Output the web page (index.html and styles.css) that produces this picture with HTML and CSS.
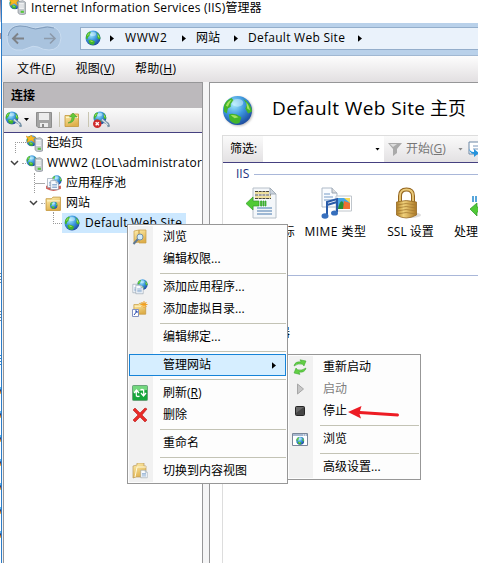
FILE: index.html
```html
<!DOCTYPE html>
<html lang="zh-CN">
<head>
<meta charset="utf-8">
<title>Internet Information Services (IIS)管理器</title>
<link rel="stylesheet" href="styles.css">
</head>
<body>
<svg class="defs" aria-hidden="true">
  <defs>
    <radialGradient id="sea" cx=".38" cy=".3" r=".75"><stop offset="0" stop-color="#a4e8fc"/><stop offset=".5" stop-color="#3c96de"/><stop offset="1" stop-color="#1a459a"/></radialGradient>
    <linearGradient id="gold" x2="1"><stop offset="0" stop-color="#ad7b20"/><stop offset=".35" stop-color="#f1d27c"/><stop offset="1" stop-color="#ac7824"/></linearGradient>
    <linearGradient id="fold" y2="1" x2=".4"><stop offset="0" stop-color="#fff0b0"/><stop offset="1" stop-color="#dfb04c"/></linearGradient>
    <symbol id="globe" viewBox="0 0 32 32">
      <circle cx="16" cy="16" r="15" fill="url(#sea)"/>
      <path d="M2 11Q4 5 10 3L12 6 9 9 9 12 6 14 5 19 2 17ZM7 20Q13 18 20 23L18 29Q12 31 8 26ZM22 4Q30 8 31 17L27 19 24 14 26 10Z" fill="#43b52b"/>
      <path d="M4 11Q6 6 10 5L8 8 6 12ZM25 7Q28 11 29 16L26 14ZM9 21Q13 20 17 23L13 24Z" fill="#a4e15e"/>
      <ellipse cx="16" cy="8" rx="6" ry="4" fill="#e4faff" opacity=".45"/>
    </symbol>
    <symbol id="server" viewBox="0 0 16 16">
      <use href="#globe" x="0" y="0" width="11" height="11"/>
      <path d="M8.5 3.5 13 2.5 15.5 4V15L11 16 8.5 14Z" fill="#c3c9ce" stroke="#8b9299" stroke-width=".7"/>
      <path d="M9.5 5.5H14M9.5 7.5H14M9.5 9.5H14" stroke="#fff"/><path d="M11 12h3v2h-3z" fill="#56c83a"/>
    </symbol>
    <symbol id="start" viewBox="0 0 16 16">
      <use href="#server" width="16" height="16"/>
      <path d="M0 1 3 2 5 0 6 2 9 2 7 4 8 7 5 5 1 7 2 4Z" fill="#f8ba22" stroke="#df8915" stroke-width=".5"/>
    </symbol>
    <symbol id="folder" viewBox="0 0 16 16">
      <path d="M1 3.5H6L7.5 2H14.5V14.5H1Z" fill="url(#fold)" stroke="#c39539" stroke-width=".8"/>
      <path d="M2 5.5H14" stroke="#fff5c7"/>
    </symbol>
    <symbol id="page" viewBox="0 0 16 16">
      <path d="M1.5.5H10.5L14.5 4.5V15.5H1.5Z" fill="#f9fcff" stroke="#8796a5"/>
      <path d="M10.5.5V4.5H14.5" fill="#d6dee8" stroke="#8796a5"/><path d="M4 7H12M4 9.5H12M4 12H12" stroke="#4e7eb5"/>
    </symbol>
    <symbol id="plug" viewBox="0 0 16 16">
      <use href="#globe" width="13" height="13"/>
      <path d="M8 8 12 11M11 10 14 12 15 15" stroke="#7793a8" stroke-width="2.4" fill="none"/><path d="M8.5 8 12 11M12 11 14 13" stroke="#d6e2ea" stroke-width="1.1"/>
    </symbol>
    <symbol id="lens" viewBox="0 0 16 16">
      <path d="M2 2 7 1V13L2 14ZM7 1H14V14H7Z" fill="url(#fold)" stroke="#c69b43" stroke-width=".7"/>
      <path d="M6 10 1.5 15" stroke="#5e7893" stroke-width="2"/><circle cx="8" cy="8" r="3" fill="#d2ecfa" stroke="#7590a8"/>
    </symbol>
    <symbol id="apps" viewBox="0 0 16 16">
      <use href="#globe" x="5" width="11" height="11"/><use href="#page" x="0" y="4" width="9" height="11"/><use href="#page" x="3" y="5" width="9" height="11"/>
    </symbol>
    <symbol id="pool" viewBox="0 0 16 16">
      <path d="M1 10H15V13Q8 17 1 13Z" fill="#d0605a"/><use href="#globe" x="6" width="10" height="10"/><use href="#page" x="1.5" y="2" width="9" height="11"/><use href="#page" x="4.5" y="4" width="9" height="11"/>
    </symbol>
    <symbol id="newdir" viewBox="0 0 16 16">
      <use href="#folder" x="1" width="14" height="15"/><path d="M12 0V7M8.5 3.5H15.5M9.5 1 14.5 6M14.5 1 9.5 6" stroke="#f49f1e"/>
      <path d="M.5 8.5H6.5V15.5H.5Z" fill="#fff" stroke="#8392c0"/><path d="M2 14 5 10M3 10H5V12" stroke="#2547b0" fill="none"/>
    </symbol>
    <symbol id="refresh" viewBox="0 0 16 16">
      <rect x=".5" y=".5" width="15" height="15" rx="1" fill="#16a63b" stroke="#6aa37a"/><path d="M1 1H15V5L1 7Z" fill="#73d77e"/>
      <path d="M4.5 11.5Q4 8 4.5 6M2 8 4.5 5 7 8M11.5 4.5Q12 8 11.5 10M9 8 11.5 11 14 8M4.5 11Q6 12 7.5 11M11.5 5Q10 4 8.5 5" stroke="#fff" stroke-width="1.3" fill="none"/>
    </symbol>
    <symbol id="cross" viewBox="0 0 16 16"><path d="M1 3 3 1Q6 4 8 6L13 1 15 2 10 8 15 13 13 15 8 10 3 15 1 13 6 8Z" fill="#e92b27" stroke="#b51b1b" stroke-width=".6"/></symbol>
    <symbol id="content" viewBox="0 0 16 16"><path d="M1 3 5 2V0H12V3H14V14H4L1 15Z" fill="url(#fold)" stroke="#b9995d" stroke-width=".7"/><path d="M3 14 5 4H14" fill="none" stroke="#fff8db"/><use href="#page" x="8" y="6" width="8" height="10"/></symbol>
    <symbol id="restart" viewBox="0 0 16 16"><path d="M2 7Q3 2 9 3L8 .8 14 2 12 7 10.5 5.2Q6 4 2 7ZM14 9Q13 14 7 13L8 15.4 2 14 4 9 5.5 10.8Q10 12 14 9Z" fill="#62cf45" stroke="#36a12a" stroke-width=".5"/></symbol>
    <symbol id="play" viewBox="0 0 16 16"><path d="M5.5 3 11.5 8 5.5 13Z" fill="#c6c6c6" stroke="#a6a6a6"/></symbol>
    <symbol id="stop" viewBox="0 0 16 16"><rect x="3.5" y="3.5" width="9" height="9" rx="1" fill="#454545" stroke="#252525"/><path d="M4 4H12L4 10Z" fill="#686868"/></symbol>
    <symbol id="browse" viewBox="0 0 16 16"><path d="M.5 2.5H15.5V14.5H.5Z" fill="#fff" stroke="#7a8799"/><path d="M1 3H15V5H1Z" fill="#a7b7cf"/><path d="M11 4H14" stroke="#fff" stroke-dasharray="1"/><use href="#globe" x="4" y="5.5" width="8.5" height="8.5"/></symbol>
    <symbol id="tri" viewBox="0 0 5 8"><path d="M0 0 5 4 0 8Z"/></symbol>
  </defs>
</svg>

<div class="screen">
  <div class="backdrop"></div>
  <main class="window">
    <header class="title"><svg class="i17"><use href="#start"/></svg><span class="title-en">Internet Information Services (IIS)</span><span>管理器</span></header>
    <nav class="nav">
      <svg class="history" viewBox="0 0 56 28">
        <path d="M13 1Q20 1 24 3 28 5 34 3 39 1 45 2 55 5 55 14 54 26 43 26 37 26 32 23 27 21 22 24 17 27 10 26 1 24 1 13 2 2 13 1Z" fill="#a9c3de" stroke="#c9dcf0"/>
        <path d="M2 12Q4 2 14 2 21 2 25 4 29 6 35 4 41 2 48 4" fill="none" stroke="#7f9bbb"/>
        <path d="M18 14.5H7M12 9.5 7 14.5 12 19.5" fill="none" stroke="#7e8287" stroke-width="1.9"/><path d="M38 14.5H49M44 9.5 49 14.5 44 19.5" fill="none" stroke="#8d9aaa" stroke-width="1.6"/>
      </svg>
      <div class="address"><svg class="i16"><use href="#globe"/></svg><svg class="tri t1"><use href="#tri"/></svg><span class="lat a1">WWW2</span><svg class="tri t2"><use href="#tri"/></svg><span class="a2">网站</span><svg class="tri t3"><use href="#tri"/></svg><span class="lat a3">Default Web Site</span><svg class="tri"><use href="#tri"/></svg></div>
    </nav>
    <div class="menubar"><span>文件(<u>F</u>)</span><span>视图(<u>V</u>)</span><span>帮助(<u>H</u>)</span></div>
    <div class="body">
      <aside class="left">
        <h2>连接</h2>
        <div class="tools">
          <svg class="i17"><use href="#plug"/></svg><i class="down"></i>
          <svg class="i16 save" viewBox="0 0 16 16"><path d="M.5.5H15.5V15.5H2L.5 14Z" fill="#a4a4a4" stroke="#8d8d8d"/><path d="M3 1H13V8H3ZM4 11H12V15H4Z" fill="#ececec"/><path d="M6 12H8V15H6Z" fill="#888"/></svg>
          <i class="sep"></i><svg class="i16" viewBox="0 0 16 16"><use href="#folder"/><path d="M4 11Q8 10 8 5H5.5L9 1 13 5H10.5Q10 11 4 11Z" fill="#63c938" stroke="#37942b" stroke-width=".5"/></svg>
          <i class="sep s2"></i><svg class="i17" viewBox="0 0 16 16"><use href="#plug"/><circle cx="4" cy="12" r="4" fill="#cf2a2a"/><path d="M2.5 10.5 5.5 13.5M5.5 10.5 2.5 13.5" stroke="#fff" stroke-width="1.3"/></svg>
        </div>
        <div class="tree">
          <div class="row r1"><i class="elbow first"></i><svg class="i17"><use href="#start"/></svg><span>起始页</span></div>
          <div class="row r2"><svg class="chev" viewBox="0 0 9 6"><path d="M1 1 4.5 4.5 8 1"/></svg><i class="dots"></i><svg class="i17"><use href="#server"/></svg><span class="host">WWW2 (LOL\administrator</span></div>
          <div class="row r3"><i class="elbow through"></i><svg class="i17"><use href="#pool"/></svg><span>应用程序池</span></div>
          <div class="row r4"><svg class="chev" viewBox="0 0 9 6"><path d="M1 1 4.5 4.5 8 1"/></svg><i class="dots"></i><svg class="i17" viewBox="0 0 16 16"><use href="#folder"/><use href="#globe" x="4.5" y="6" width="7.5" height="7.5"/></svg><span>网站</span></div>
          <div class="row r5"><i class="elbow"></i><div class="selected"><svg class="i16"><use href="#globe"/></svg><span class="lat">Default Web Site</span></div></div>
        </div>
      </aside>
      <section class="right">
        <div class="heading"><svg class="big-globe"><use href="#globe"/></svg><h1><span class="h-en">Default Web Site</span> 主页</h1></div>
        <div class="content">
          <div class="filter"><span class="flabel">筛选:</span><div class="field"><i class="down"></i></div><svg class="funnel" viewBox="0 0 14 14"><path d="M0 1H14L9 7V11L5 14V7Z" fill="#aaa"/><path d="M2 2H9L5 5Z" fill="#ddd"/></svg><span class="go">开始(<u>G</u>)</span><i class="down dim"></i><svg class="showall" viewBox="0 0 16 16"><path d="M1 1H15V13H1Z" fill="#fff" stroke="#6d87a5"/><path d="M5 5H15M5 8H15" stroke="#7c98bb"/><path d="M1 5Q1 11 6 11V8L11 12 6 16V13Q1 13 1 5Z" fill="#2593dc"/></svg></div>
          <div class="group"><span>IIS</span><i></i></div>
          <div class="features">
            <div class="feature"><svg viewBox="0 0 32 32"><path d="M8 1H25L31 7V31H8Z" fill="#f4f7fa" stroke="#b7c0c9"/><path d="M25 1V7H31Z" fill="#ccd5df" stroke="#a3adb8"/><path d="M10 4.5H24M10 8H26M10 11.5H26" stroke="#4a4638" stroke-width="1.2" stroke-dasharray="3 .7"/><path d="M10 6H24M10 10H26" stroke="#e9c942"/><path d="M12 21H27M12 24H27M12 27H27" stroke="#4779ad"/><path d="M1 16.5 8 10V14H14V19H8V23ZM15.5 14H17V19H15.5ZM18 14H19V19H18ZM20 14H21V19H20Z" fill="#50ca35" stroke="#329d29" stroke-width=".7"/></svg><span class="header-label">HTTP 响应标</span></div>
            <div class="feature"><svg viewBox="0 0 32 32"><path d="M2 1H12L17 6V20H2Z" fill="#fafcff" stroke="#aebac8"/><path d="M12 1V6H17" fill="#ddd" stroke="#9ba6b4"/><path d="M4 7H10M4 10H13M4 13H13" stroke="#779bc6"/><path d="M16 9H31.5V24H16Z" fill="#fff" stroke="#c0c6cc"/><path d="M18 11H30V22H18Z" fill="#46a4e6"/><path d="M18 22Q20 12 23 15L26 22Z" fill="#278f34"/><path d="M23 22 24 14 30 16V22Z" fill="#ef7032"/><path d="M24 11H30V16Z" fill="#f5d955"/><path d="M7 28V15L17 12V25M7 18 17 15" stroke="#285aa8" stroke-width="2" fill="none"/><ellipse cx="5" cy="29" rx="3.5" ry="2.7" fill="#376fbd"/><ellipse cx="14.5" cy="26" rx="3.5" ry="2.6" fill="#376fbd"/></svg><span class="mime">MIME 类型</span></div>
            <div class="feature"><svg class="lock" viewBox="0 0 32 32"><ellipse cx="20" cy="28" rx="10" ry="3" fill="#ddd"/><path d="M9 17V9Q9 2.5 15.5 2.5T22 9V17" fill="none" stroke="#94651e" stroke-width="4"/><path d="M9 17V9Q9 2.5 15.5 2.5T22 9V17" fill="none" stroke="#eacb7c" stroke-width="1.8"/><path d="M5.5 15Q15 12 25.5 15V28Q15 34 5.5 28Z" fill="url(#gold)" stroke="#966a24" stroke-width=".8"/><path d="M6 18Q15 15 25 18M6 21Q15 18 25 21M6 24Q15 21 25 24M6 27Q15 24 25 27" stroke="#a67c34" fill="none" stroke-width=".8"/></svg><span>SSL 设置</span></div>
            <div class="feature last"><svg viewBox="0 0 32 32"><path d="M3 10H9M3 12H9M3 14H9" stroke="#2089cf" stroke-width="1.5" stroke-dasharray="2 1"/><path d="M1 22 8 16V20H19V25H8V29Z" fill="#50c936" stroke="#2e9728" stroke-width=".7"/></svg><span>处理</span></div>
          </div>
          <div class="group second"><i></i></div>
          <div class="editor">配置编辑器</div>
        </div>
      </section>
    </div>
  </main>

  <div class="popup context">
    <div class="item"><svg class="i16"><use href="#lens"/></svg><span>浏览</span></div>
    <div class="item"><svg class="i16"></svg><span>编辑权限...</span></div>
    <hr>
    <div class="item"><svg class="i16"><use href="#apps"/></svg><span>添加应用程序...</span></div>
    <div class="item"><svg class="i16"><use href="#newdir"/></svg><span>添加虚拟目录...</span></div>
    <hr>
    <div class="item"><svg class="i16"></svg><span>编辑绑定...</span></div>
    <hr>
    <div class="item active"><svg class="i16"></svg><span>管理网站</span><svg class="tri"><use href="#tri"/></svg></div>
    <hr>
    <div class="item"><svg class="i16"><use href="#refresh"/></svg><span>刷新(<u>R</u>)</span></div>
    <div class="item"><svg class="i16"><use href="#cross"/></svg><span>删除</span></div>
    <hr>
    <div class="item"><svg class="i16"></svg><span>重命名</span></div>
    <hr>
    <div class="item"><svg class="i16"><use href="#content"/></svg><span>切换到内容视图</span></div>
  </div>
  <div class="popup submenu">
    <div class="item"><svg class="i16"><use href="#restart"/></svg><span>重新启动</span></div>
    <div class="item disabled"><svg class="i16"><use href="#play"/></svg><span>启动</span></div>
    <div class="item"><svg class="i16"><use href="#stop"/></svg><span>停止</span></div>
    <hr>
    <div class="item"><svg class="i16"><use href="#browse"/></svg><span>浏览</span></div>
    <hr>
    <div class="item"><svg class="i16"></svg><span>高级设置...</span></div>
  </div>
  <svg class="pointer" viewBox="0 0 54 14"><path d="M1 6 14.5 0 13 5 51 7.5Q53 9 51 10.5L12.5 8 14 12.5Z" fill="#ed1c24"/></svg>
</div>
</body>
</html>
```
FILE: styles.css
```css
* { box-sizing: border-box; }
body { margin: 0; background: #fff; color: #000; font: 12px/16px "Open Sans", "Noto Sans CJK SC", sans-serif; }
svg { flex: none; }
u { text-underline-offset: 1px; }
.defs { position: absolute; width: 0; height: 0; }
.screen { position: relative; display: flex; width: 478px; height: 563px; overflow: hidden; white-space: nowrap; }
.backdrop { width: 1px; flex: none; background:
  linear-gradient(#746d91, #d9d7e3) 0 0 / 1px 22px no-repeat,
  linear-gradient(#b9928d, #b9928d) 0 33px / 1px 6px no-repeat,
  repeating-linear-gradient(#80858a 0 1px, #fff 1px 3px) 0 273px / 1px 10px no-repeat,
  repeating-linear-gradient(#80858a 0 1px, #fff 1px 3px) 0 311px / 1px 10px no-repeat,
  repeating-linear-gradient(#3a85c8 0 1px, #fff 1px 3px) 0 355px / 1px 10px no-repeat,
  repeating-linear-gradient(#62b6ee 0 2px, #172c70 3px, #d5762f 5px, #f3d476 7px, #fff 7px 24px) 0 387px / 1px 152px no-repeat, #fff; }
.window { display: flex; flex-direction: column; flex: 1; min-width: 0; border-left: 1px solid #2c7cc7; }
.i16 { width: 16px; height: 16px; }
.i17 { width: 17px; height: 17px; }
.title { display: flex; flex: none; height: 23px; padding: 0 0 7px 7px; align-items: center; }
.title .i17 { margin: -3px 5px 0 0; }
.title-en { letter-spacing: .22px; }
.lat { letter-spacing: .27px; }
.nav { display: flex; flex: none; align-items: center; height: 33px; padding-left: 4px; background: #b9d1ea; border-bottom: 1px solid #a1b8d2; }
.history { width: 56px; height: 28px; margin-top: -2px; }
.address { display: flex; align-items: center; flex: 1; height: 23px; margin: -2px 0 0 18px; padding-left: 4px; background: #eaf2fb; border: solid #94aecb; border-width: 1px 0 1px 1px; }
.address .i16 { margin-right: 9px; }
.tri { width: 4px; height: 7px; flex: none; }
.t1 { margin-right: 11px; }
.a1 { width: 57px; letter-spacing: .6px; }
.t2 { margin-right: 10px; }
.a2 { width: 38px; }
.t3 { margin-right: 10px; }
.a3 { width: 110px; }
.menubar { display: flex; flex: none; gap: 20px; height: 26px; padding: 5px 0 0 15px; background: linear-gradient(#fdfdfd, #e2dfe1); letter-spacing: .25px; }
.body { display: flex; flex: 1; min-height: 0; background: #f5f5f6; }
.left { width: 200px; margin-left: 1px; flex: none; border: solid #969698; border-width: 1px 1px 0; background: #fff; overflow: hidden; }
h2 { margin: 0; height: 25px; padding: 5px 0 0 7px; background: #bcb9bc; font-size: 12px; line-height: 16px; }
.tools { display: flex; align-items: center; height: 25px; padding: 0 0 1px 1px; background: linear-gradient(#fafafa, #e3e1e3); border-bottom: 1px solid #454080; }
.down { width: 5px; height: 3px; background: #000; clip-path: polygon(0 0, 100% 0, 50% 100%); flex: none; }
.tools .down { margin-left: 2px; }
.save { margin: 0 7px; }
.sep { width: 1px; height: 15px; margin-right: 4px; background: #c9c5b1; flex: none; }
.s2 { margin-left: 8px; }
.row { display: flex; align-items: center; height: 20px; }
.row .i17 { margin-right: 4px; }
.elbow { width: 11px; height: 12px; margin-top: -10px; border: dotted #999; border-width: 0 0 1px 1px; flex: none; }
.first { height: 11px; margin-top: 9px; border-width: 1px 0 0 1px; }
.through { height: 20px; margin-top: 0; border-bottom: 0; background: linear-gradient(#aaa, #aaa) 0 10px / 11px 1px no-repeat; }
.dots { width: 4px; border-top: 1px dotted #aaa; flex: none; }
.chev { width: 9px; height: 6px; fill: none; stroke: #404040; stroke-width: 1.5; }
.host { letter-spacing: .24px; }
.r1 { padding-left: 11px; }
.r2 { padding-left: 6px; }
.r2 .dots { margin-left: 3px; }
.r3 { padding-left: 30px; }
.r4 { padding-left: 25px; }
.r4 .dots { margin-left: 3px; }
.r5 { padding-left: 49px; }
.r5 .elbow { margin-right: -2px; }
.selected { display: flex; align-items: center; gap: 5px; width: 124px; height: 20px; padding-left: 2px; background: #cce8ff; }
.right { flex: 1; min-width: 0; margin-left: 6px; border: solid #969698; border-width: 1px 0 0 1px; background: #fff; display: flex; flex-direction: column; }
.heading { display: flex; height: 52px; align-items: center; padding-left: 12px; flex: none; }
.big-globe { width: 31px; height: 31px; margin: 3px 19px 0 0; filter: drop-shadow(1px 1px 1px #bbb); }
h1 { margin: -3px 0 0; font-size: 18px; line-height: 24px; font-weight: 400; }
.h-en { font-size: 19px; letter-spacing: .4px; }
.content { flex: 1; margin-left: 12px; border-left: 1px solid #ddd; overflow: hidden; }
.filter { display: flex; align-items: center; height: 28px; border-top: 1px solid #ddd; border-bottom: 1px solid #454080; background: linear-gradient(#fafafa, #e3e1e3); }
.flabel { width: 40px; padding-left: 7px; flex: none; }
.field { display: flex; align-items: center; justify-content: flex-end; width: 121px; height: 26px; padding-right: 4px; background: #fff; flex: none; }
.funnel { width: 14px; height: 14px; margin: 0 4px; }
.go { width: 52px; color: #777; flex: none; }
.dim { background: #888; }
.showall { width: 16px; height: 16px; margin-left: 5px; }
.group { display: flex; align-items: center; gap: 5px; height: 22px; padding-left: 13px; color: #1c2f7d; }
.group i { flex: 1; height: 1px; background: #a9b7d9; }
.features { display: flex; padding-top: 2px; height: 80px; }
.feature { display: flex; flex-direction: column; align-items: center; width: 75px; flex: none; gap: 5px; }
.feature svg { width: 32px; height: 32px; }
.feature .lock { margin-right: 8px; }
.header-label { margin-left: 0; }
.mime { letter-spacing: .45px; }
.last { align-items: flex-start; padding-left: 6px; }
.last svg { margin-left: 15px; }
.second { padding-left: 0; height: 20px; }
.editor { margin: 40px 0 0 7px; }
.popup { position: absolute; border: 1px solid #979797; background: linear-gradient(#f1f1f1, #f1f1f1) 1px 1px / 24px calc(100% - 2px) no-repeat #fdfdfd; padding: 1px; }
.context { left: 127px; top: 224px; width: 161px; height: 260px; }
.submenu { left: 287px; top: 354px; width: 134px; height: 126px; }
.item { display: flex; align-items: center; height: 22px; padding-left: 3px; }
.item .i16 { margin-right: 15px; }
.popup hr { height: 1px; margin: 3px 0 2px 31px; border: 0; background: #c3c3b5; }
.item span { letter-spacing: .02px; }
.active { background: #d6eeff; outline: 1px solid #1683d8; outline-offset: -1px; }
.active .tri { margin-left: auto; margin-right: 10px; }
.disabled { color: #7d7d7d; }
.pointer { position: absolute; left: 347px; top: 406px; width: 54px; height: 14px; }
```
